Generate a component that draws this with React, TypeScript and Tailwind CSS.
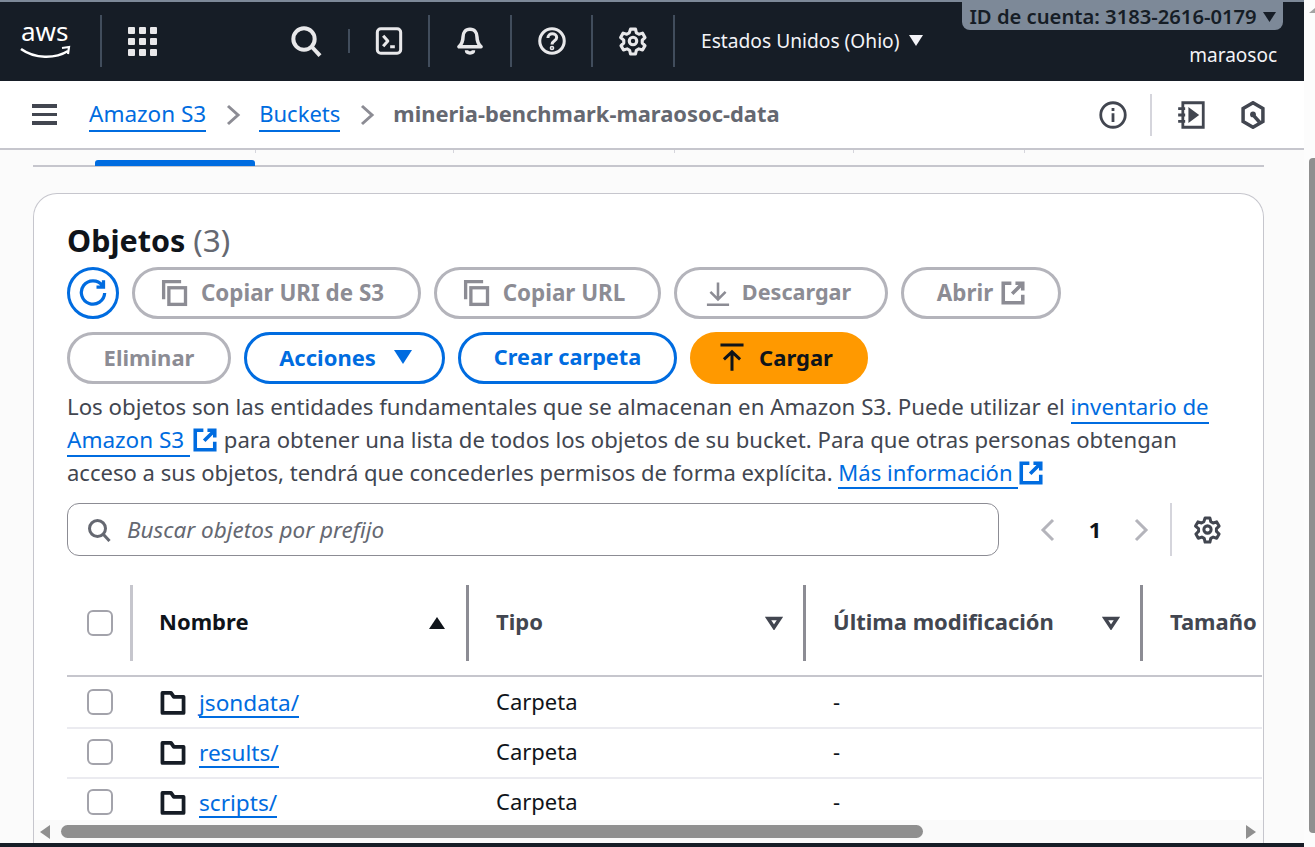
import React from "react";

const Divider = ({ h = "h-[52px]", c = "bg-[#414d5c]" }: { h?: string; c?: string }) => <div className={`w-[2px] ${h} ${c} shrink-0`} />;

const Ext = ({ c = "#8c8c94", s = 26 }: { c?: string; s?: number }) => (
  <svg width={s} height={s} viewBox="0 0 16 16" fill="none" stroke={c} strokeWidth="2.2">
    <path d="M7 2H2v12h12V9M9.5 2H14v4.5M14 2 7.5 8.5" />
  </svg>
);
const Copy = () => (
  <svg width="28" height="28" viewBox="0 0 16 16" fill="none" stroke="#8c8c94" strokeWidth="1.9">
    <path d="M1.500 11.500V1.500h10" />
    <rect x="4.500" y="5" width="9.500" height="9.500" />
  </svg>
);
const Gear = ({ c, s }: { c: string; s: number }) => (
  <svg width={s} height={s} viewBox="0 0 24 24" fill="none" stroke={c} strokeWidth="2.500" strokeLinejoin="round">
    <path d="M10 2.500h4l.7 3 2 1.100 2.900-.9 2 3.500-2.200 2.100v2.300l2.200 2.100-2 3.500-2.900-.9-2 1.100-.7 3h-4l-.7-3-2-1.100-2.900.9-2-3.500 2.200-2.100v-2.300L2.100 9.200l2-3.500 2.900.9 2-1.100z" />
    <circle cx="12" cy="12" r="3" />
  </svg>
);
const Search = ({ c, s }: { c: string; s: number }) => (
  <svg width={s} height={s} viewBox="0 0 24 24" fill="none" stroke={c} strokeWidth="3">
    <circle cx="10.500" cy="10.500" r="8" />
    <path d="m16.500 16.500 6 6.500" />
  </svg>
);
const Folder = () => (
  <svg width="26" height="26" viewBox="0 0 16 16" fill="none" stroke="#161d26" strokeWidth="2.300" strokeLinejoin="round" className="shrink-0">
    <path d="M1.500 1.800h5.300l1.700 2.400h6v9.900h-13z" />
  </svg>
);
const Checkbox = () => <div className="w-[26px] h-[26px] rounded-[6px] border-2 border-[#a3a3ab] bg-white shrink-0" />;

const Btn = ({ w, children, tone = "off", extra = "gap-[10px] pb-[2px]" }: { w: string; children: React.ReactNode; tone?: "off" | "on" | "main"; extra?: string }) => {
  const t = tone === "off" ? "border-[#b4b4bb] text-[#8c8c94]" : tone === "on" ? "border-[#006ce0] text-[#006ce0]" : "border-[#ff9900] bg-[#ff9900] text-[#0f141a]";
  return <div className={`${w} h-[52px] rounded-[26px] border-[3px] ${t} ${extra} flex items-center justify-center font-bold text-[22px] shrink-0 whitespace-nowrap`}>{children}</div>;
};

const Link = ({ children, size = "" }: { children: React.ReactNode; size?: string }) => (
  <span className={`text-[#006ce0] border-b-2 border-[#006ce0] ${size}`}>{children}</span>
);

const HeaderCell = ({ w, label, sort, dark }: { w: string; label: string; sort: "up" | "down"; dark?: boolean }) => (
  <div className={`${w} h-[76px] flex items-center shrink-0`}>
    <div className={`flex-1 flex items-center justify-between ${dark ? "pl-[26px] text-[#0f141a]" : "pl-[27px] text-[#424650]"} pr-[20px] font-bold text-[22px]`}>
      <span className="whitespace-nowrap pb-[4px]">{label}</span>
      {sort === "up" ? (
        <svg width="18" height="14" viewBox="0 0 18 14"><path d="M9 1 17 13H1z" fill="#0f141a" /></svg>
      ) : (
        <svg width="18" height="14" viewBox="0 0 18 14" fill="none" stroke="#424650" strokeWidth="3.400"><path d="M3 2.500h12L9 11.500z" /></svg>
      )}
    </div>
    <div className="w-[3px] h-[76px] bg-[#8c8c94] shrink-0" />
  </div>
);

const Row = ({ name, h, pb }: { name: string; h: string; pb: string }) => (
  <div className={`flex items-center ${h} ${pb} border-b-2 border-[#ebebf0] text-[22px] text-[#0f141a] w-[1195px] shrink-0`}>
    <div className="w-[66px] pl-[20px] shrink-0"><Checkbox /></div>
    <div className="w-[336px] pl-[27px] pt-[2px] flex items-center gap-[13px] shrink-0">
      <Folder />
      <span className="inline-block text-[#006ce0] border-b-2 border-[#006ce0] text-[22.6px] leading-[27px]">{name}</span>
    </div>
    <div className="w-[337px] pl-[27px] pb-[2px] shrink-0">Carpeta</div>
    <div className="pl-[27px] pb-[2px]">-</div>
  </div>
);

const ticks = ["left-[222px]", "left-[420px]", "left-[641px]", "left-[820px]", "left-[991px]"];

export default function App() {
  return (
    <div className="relative w-[1315px] h-[847px] overflow-hidden bg-[#fbfbfb] flex font-['Noto_Sans',sans-serif] text-[#424650]">
      <div className="flex-1 min-w-0 flex flex-col">
        {/* Top nav */}
        <div className="h-[81px] bg-[#161d26] border-t-2 border-[#7d8998] pb-[1px] flex items-center relative shrink-0 text-white">
          <div className="w-[100px] pl-[20px] shrink-0">
            <svg width="54" height="42" viewBox="0 0 54 42" className="overflow-visible">
              <text x="1" y="21" fill="#fff" fontSize="26" fontFamily="Noto Sans, sans-serif">aws</text>
              <path d="M1 29c14 10 34 10 47 2" fill="none" stroke="#fff" strokeWidth="2.600" />
              <path d="M42 28l7-1-1 7" fill="none" stroke="#fff" strokeWidth="2.200" />
            </svg>
          </div>
          <Divider />
          <div className="w-[80px] flex justify-center shrink-0">
            <div className="grid grid-cols-3 gap-[4px]">
              {Array.from({ length: 9 }).map((_, i) => <div key={i} className="w-[7px] h-[7px] rounded-[1px] bg-[#e8e8ea]" />)}
            </div>
          </div>
          <div className="w-[108px] shrink-0" />
          <Search c="#e8e8ea" s={32} />
          <div className="w-[2px] h-[24px] bg-[#414d5c] ml-[26px] shrink-0" />
          <div className="w-[78px] flex justify-center shrink-0">
            <svg width="28" height="28" viewBox="0 0 24 24" fill="none" stroke="#e8e8ea" strokeWidth="2.600" strokeLinejoin="round">
              <rect x="2" y="1.500" width="20" height="21" rx="3" />
              <path d="m7 7.500 4 4.500-4 4.500M13 17h4" />
            </svg>
          </div>
          <Divider />
          <div className="w-[80px] flex justify-center shrink-0">
            <svg width="28" height="28" viewBox="0 0 24 24" fill="none" stroke="#e8e8ea" strokeWidth="3" strokeLinejoin="round">
              <path d="M12 2c-4 0-6 3-6 6.500 0 4-1 6-3.500 8.500h19C19 14.500 18 12.500 18 8.500 18 5 16 2 12 2zM9 20c0 3 6 3 6 0" />
            </svg>
          </div>
          <Divider />
          <div className="w-[79px] flex justify-center shrink-0">
            <svg width="28" height="28" viewBox="0 0 24 24" fill="none" stroke="#e8e8ea" strokeWidth="2.600">
              <circle cx="12" cy="12" r="10.500" />
              <path d="M8.500 9.500c0-5 7.500-4.500 7.500-.5 0 3-4 2.500-4 6" />
              <circle cx="12" cy="18" r="0.700" />
            </svg>
          </div>
          <Divider />
          <div className="w-[80px] flex justify-center shrink-0"><Gear c="#e8e8ea" s={30} /></div>
          <Divider />
          <div className="flex items-center gap-[10px] pl-[26px] text-[#f3f3f7] text-[19.2px] whitespace-nowrap">
            Estados Unidos (Ohio)
            <svg width="14" height="11" viewBox="0 0 14 11"><path d="M0 0h14L7 11z" fill="#f3f3f7" /></svg>
          </div>
          <div className="absolute right-[21px] top-[-2px] h-[30px] w-[321px] bg-[#7d8998] rounded-b-[8px] flex items-center justify-center gap-[6px] pt-[3px] font-semibold text-[#161d26] text-[20.200px] whitespace-nowrap">
            ID de cuenta: 3183-2616-0179
            <svg width="13" height="10" viewBox="0 0 13 10"><path d="M0 0h13L6.500 10z" fill="#161d26" /></svg>
          </div>
          <div className="absolute right-[27px] top-[39px] text-[19px] text-[#f3f3f7]">maraosoc</div>
        </div>
        {/* Breadcrumb */}
        <div className="h-[69px] bg-white border-b-2 border-[#c6c6cd] flex items-center shrink-0">
          <div className="w-[89px] pl-[32px] shrink-0">
            <div className="w-[25px] flex flex-col gap-[5px]">
              <div className="h-[3.500px] bg-[#424650]" /><div className="h-[3.500px] bg-[#424650]" /><div className="h-[3.500px] bg-[#424650]" />
            </div>
          </div>
          <div className="flex items-center text-[22px] whitespace-nowrap">
            <Link size="text-[22.5px]">Amazon S3</Link>
            <svg className="ml-[17px] mr-[16px]" width="20" height="24" viewBox="0 0 20 24" fill="none" stroke="#8c8c94" strokeWidth="3"><path d="m5 3 10 9-10 9" /></svg>
            <Link>Buckets</Link>
            <svg className="ml-[17px] mr-[16px]" width="20" height="24" viewBox="0 0 20 24" fill="none" stroke="#8c8c94" strokeWidth="3"><path d="m5 3 10 9-10 9" /></svg>
            <span className="font-bold text-[#656871] text-[21.9px]">mineria-benchmark-maraosoc-data</span>
          </div>
          <div className="ml-auto flex items-center pr-[37px]">
            <svg width="28" height="28" viewBox="0 0 24 24" fill="none" stroke="#424650" strokeWidth="2.400">
              <circle cx="12" cy="12" r="10.500" /><path d="M12 10.500V18M12 6v2.500" />
            </svg>
            <div className="w-[2px] h-[42px] bg-[#d5d5dc] ml-[23px] mr-[25px]" />
            <svg width="28" height="28" viewBox="0 0 24 24" fill="none" stroke="#424650" strokeWidth="2.400">
              <path d="M5 1.500h17.500v21H5zM1 6.500h6M1 12h6M1 17.500h6" /><path d="m11 7.500 6 4.500-6 4.500z" fill="#424650" />
            </svg>
            <svg className="ml-[34px]" width="28" height="28" viewBox="0 0 24 24" fill="none" stroke="#424650" strokeWidth="3">
              <path d="M12 1.500 20.500 6.500v11L12 22.500 3.500 17.500v-11z" /><circle cx="12" cy="11.500" r="2.500" fill="#424650" stroke="none" /><path d="m13 13 4.500 5" />
            </svg>
          </div>
        </div>
        {/* Tabs remainder */}
        <div className="pl-[33px] pr-[40px] shrink-0">
          <div className="relative h-[17px] border-b-2 border-[#c6c6cd]">
            {ticks.map((t) => <div key={t} className={`absolute ${t} top-0 w-[1px] h-[3px] bg-[#d5d5dc]`} />)}
            <div className="absolute left-[62px] top-[10px] w-[160px] h-[6px] rounded-t-[3px] bg-[#006ce0]" />
          </div>
        </div>
        {/* Card */}
        <div className="mt-[26px] ml-[33px] mr-[40px] flex-1 min-h-0 bg-white border border-b-0 border-[#c6c6cd] rounded-t-[24px] pl-[33px] flex flex-col overflow-hidden relative">
          <div className="mt-[24px] h-[44px] flex items-center text-[30.500px] leading-none">
            <span className="font-bold text-[#0f141a]">Objetos</span>
            <span className="ml-[8px] text-[#656871] text-[31.500px]">(3)</span>
          </div>
          <div className="mt-[5px] flex gap-[13px]">
            <div className="w-[52px] h-[52px] rounded-full border-[3px] border-[#006ce0] flex items-center justify-center shrink-0">
              <svg width="28" height="28" viewBox="0 0 24 24" fill="none" stroke="#006ce0" strokeWidth="2.800">
                <path d="M20 5.500A10 10 0 1 0 22 12M21 1v6h-6" />
              </svg>
            </div>
            <Btn w="w-[289px]" extra="gap-[12px] pb-[1px] pr-[8px]"><Copy /><span className="text-[22.400px]">Copiar URI de S3</span></Btn>
            <Btn w="w-[227px]" extra="gap-[12px] pb-[1px] pr-[7px]"><Copy /><span className="text-[22.400px]">Copiar URL</span></Btn>
            <Btn w="w-[214px]" extra="gap-[10px] pb-[1px] pr-[7px]">
              <svg width="28" height="28" viewBox="0 0 24 24" fill="none" stroke="#8c8c94" strokeWidth="2.200"><path d="M12 3v14M5.500 11l6.500 6.500 6.500-6.500M2.500 22h19" /></svg>
              <span className="text-[21.600px]">Descargar</span>
            </Btn>
            <Btn w="w-[160px]" extra="gap-[7px] pb-[1px] pl-[1px]"><span className="text-[22.400px]">Abrir</span><Ext /></Btn>
          </div>
          <div className="mt-[13px] flex gap-[13px]">
            <Btn w="w-[164px]">Eliminar</Btn>
            <Btn w="w-[201px]" tone="on" extra="gap-[10px] pb-[2px] pl-[2px]">Acciones<svg className="ml-[8px]" width="18" height="14" viewBox="0 0 18 14"><path d="M0 0h18L9 14z" fill="#006ce0" /></svg></Btn>
            <Btn w="w-[219px]" tone="on"><span className="text-[21.700px]">Crear carpeta</span></Btn>
            <Btn w="w-[178px]" tone="main" extra="gap-[13px] pb-[2px] pr-[7px]">
              <svg width="28" height="30" viewBox="0 0 24 26" fill="none" stroke="#0f141a" strokeWidth="2.600"><path d="M2 2.500h20M12 25V9M5 15l7-6.500 7 6.500" /></svg>
              Cargar
            </Btn>
          </div>
          <p className="mt-[6px] w-[1170px] leading-[33px] whitespace-nowrap">
            <span className="block text-[22.250px]">Los objetos son las entidades fundamentales que se almacenan en Amazon S3. Puede utilizar el <Link>inventario de</Link></span>
            <span className="block text-[22.130px]"><Link size="text-[22.5px]">Amazon S3 </Link><span className="inline-block align-[-5px] ml-[2px]"><Ext c="#006ce0" /></span> para obtener una lista de todos los objetos de su bucket. Para que otras personas obtengan</span>
            <span className="block text-[22.050px]">acceso a sus objetos, tendrá que concederles permisos de forma explícita. <Link>Más información </Link><span className="inline-block align-[-5px]"><Ext c="#006ce0" /></span></span>
          </p>
          <div className="mt-[14px] flex items-center">
            <div className="w-[932px] h-[53px] rounded-[12px] border border-[#8c8c94] flex items-center pl-[19px] gap-[16px] shrink-0 italic text-[22.500px] text-[#656871]">
              <Search c="#656871" s={24} />
              <span className="pt-[1px]">Buscar objetos por prefijo</span>
            </div>
            <svg className="ml-[39px]" width="20" height="26" viewBox="0 0 20 26" fill="none" stroke="#b4b4bb" strokeWidth="3"><path d="m15 3-10 10 10 10" /></svg>
            <span className="ml-[27px] w-[20px] text-center font-bold text-[22px] text-[#0f141a]">1</span>
            <svg className="ml-[26px]" width="20" height="26" viewBox="0 0 20 26" fill="none" stroke="#b4b4bb" strokeWidth="3"><path d="m5 3 10 10-10 10" /></svg>
            <div className="ml-[19px] w-[2px] h-[53px] bg-[#d5d5dc]" />
            <div className="ml-[21px]"><Gear c="#424650" s={29} /></div>
          </div>
          <div className="mt-[29px] flex w-[1195px] h-[92px] border-b-2 border-[#c6c6cd] shrink-0 overflow-hidden">
            <div className="w-[66px] h-[76px] flex items-center shrink-0 pl-[20px] justify-between">
              <Checkbox />
              <div className="w-[3px] h-[76px] bg-[#c6c6cd]" />
            </div>
            <HeaderCell w="w-[336px]" label="Nombre" sort="up" dark />
            <HeaderCell w="w-[337px]" label="Tipo" sort="down" />
            <HeaderCell w="w-[337px]" label="Última modificación" sort="down" />
            <div className="pl-[27px] pb-[4px] h-[76px] flex items-center font-bold text-[22px] text-[#424650]">Tamaño</div>
          </div>
          <Row name="jsondata/" h="h-[52px]" pb="" />
          <Row name="results/" h="h-[50px]" pb="pb-[2px]" />
          <Row name="scripts/" h="h-[50px]" pb="pb-[2px]" />
          <div className="absolute left-0 right-0 bottom-0 h-[23px] bg-[#fafafa] flex items-center">
            <svg className="ml-[5px]" width="12" height="14" viewBox="0 0 12 14"><path d="M11 0v14L1 7z" fill="#8f8f8f" /></svg>
            <div className="ml-[10px] w-[862px] h-[13px] rounded-full bg-[#8f8f8f]" />
            <svg className="ml-auto mr-[6px]" width="12" height="14" viewBox="0 0 12 14"><path d="M1 0v14l10-7z" fill="#8f8f8f" /></svg>
          </div>
        </div>
        <div className="h-[4px] bg-[#161d26] shrink-0" />
      </div>
      {/* Page scrollbar */}
      <div className="w-[11px] bg-[#fcfcfc] shrink-0 flex flex-col items-end">
        <svg className="mt-[8px]" width="6" height="5" viewBox="0 0 6 5"><path d="M6 0v5H0z" fill="#a3a3a3" /></svg>
        <div className="mt-[145px] w-[6px] h-[675px] rounded-l-[4px] bg-[#8f8f8f]" />
      </div>
    </div>
  );
}
